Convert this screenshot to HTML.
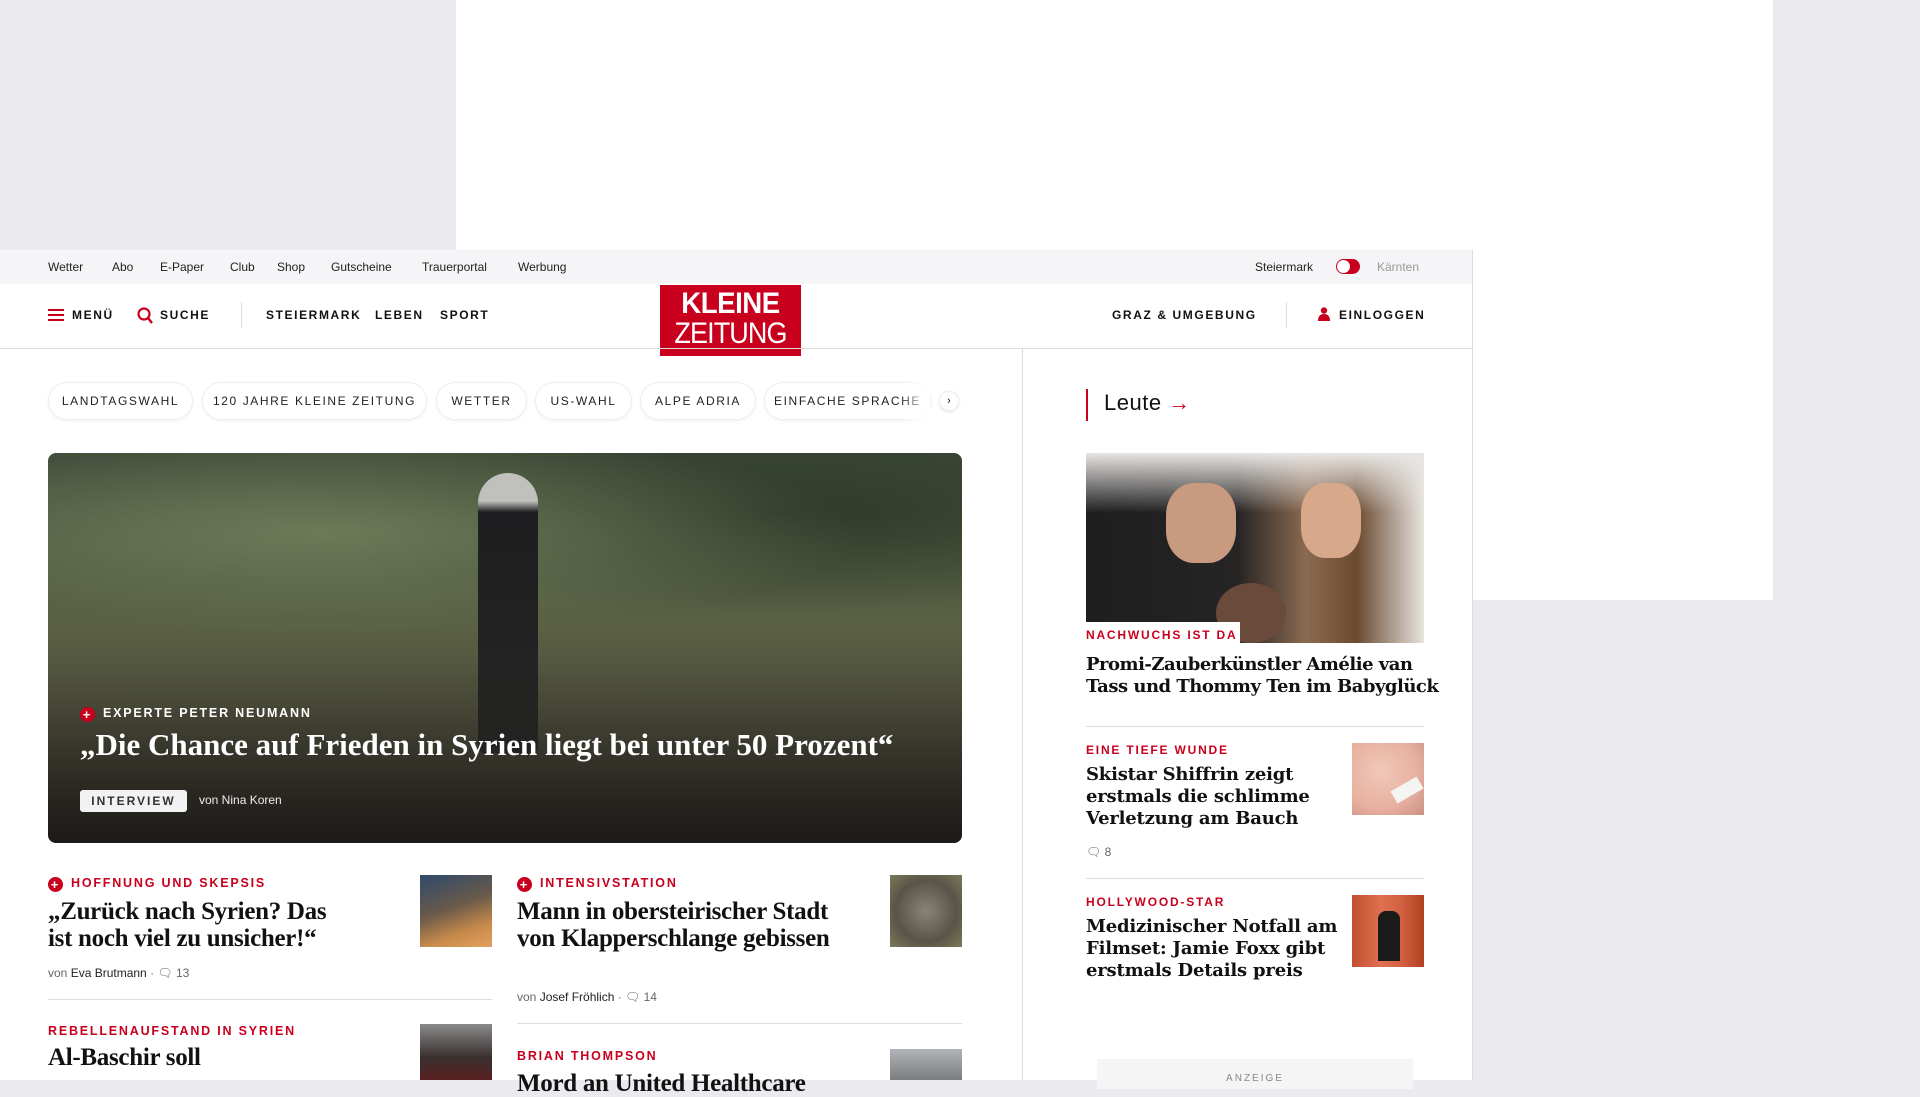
<!DOCTYPE html>
<html><head><meta charset="utf-8"><style>
*{margin:0;padding:0;box-sizing:border-box}
body{width:1920px;height:1080px;overflow:hidden;background:#ebebef;font-family:"Liberation Sans",sans-serif;position:relative;color:#111}
.a{position:absolute}
.ad{left:456px;top:0;width:1317px;height:600px;background:#fff}
.page{left:0;top:250px;width:1473px;height:830px;background:#fff}
.top{left:0;top:250px;width:1473px;height:34px;background:#f5f5f7;font-size:12px;color:#222}
.top span{position:absolute;top:10px}
.nav{font-size:12px;font-weight:bold;letter-spacing:1.6px;color:#111}
.kick{font-size:12.5px;font-weight:bold;letter-spacing:1.8px;color:#c8001e}
.h{font-family:"Liberation Serif",serif;font-weight:bold;color:#111;letter-spacing:-0.3px}
.hr{font-family:"DejaVu Serif",serif;font-weight:bold;color:#111;font-size:18px;line-height:22px;letter-spacing:-0.2px}
.tag{top:382px;height:38px;border:1px solid #eee;border-radius:19px;font-size:12px;letter-spacing:1.6px;color:#222;text-align:center;line-height:36px;box-shadow:0 1px 3px rgba(0,0,0,.06)}
.meta{font-size:12px;color:#666}
.meta b{font-weight:normal;color:#222}
.line{height:1px;background:#ddd}
.plus{display:inline-block;width:15px;height:15px;border-radius:50%;background:#c8001e;color:#fff;font-size:13px;line-height:15px;text-align:center;font-weight:bold;vertical-align:-2px;margin-right:8px}
</style></head><body>
<div class="a ad"></div>
<div class="a page"></div>
<div class="a top">
<span style="left:48px">Wetter</span><span style="left:112px">Abo</span><span style="left:160px">E-Paper</span><span style="left:230px">Club</span><span style="left:277px">Shop</span><span style="left:331px">Gutscheine</span><span style="left:422px">Trauerportal</span><span style="left:518px">Werbung</span>
<span style="left:1255px">Steiermark</span>
<span style="left:1336px;top:9px;width:24px;height:15px;border-radius:8px;background:#c8001e;border:1px solid #c8001e"><i style="position:absolute;left:0;top:0;width:13px;height:13px;border-radius:50%;background:#fff"></i></span>
<span style="left:1377px;color:#999">Kärnten</span>
</div>
<div class="a" style="left:48px;top:309px;width:16px;height:12px;border-top:2px solid #c8001e;border-bottom:2px solid #c8001e"><i style="position:absolute;left:0;top:3px;width:16px;height:2px;background:#c8001e"></i></div>
<div class="a nav" style="left:72px;top:308px">MENÜ</div>
<svg class="a" style="left:137px;top:307px" width="16" height="17" viewBox="0 0 16 17"><circle cx="7" cy="7" r="5.5" fill="none" stroke="#c8001e" stroke-width="2.2"/><path d="M11 11l4 5" stroke="#c8001e" stroke-width="2.4"/></svg>
<div class="a nav" style="left:160px;top:308px">SUCHE</div>
<div class="a" style="left:241px;top:302px;width:1px;height:26px;background:#ddd"></div>
<div class="a nav" style="left:266px;top:308px">STEIERMARK</div>
<div class="a nav" style="left:375px;top:308px">LEBEN</div>
<div class="a nav" style="left:440px;top:308px">SPORT</div>
<div class="a" style="left:660px;top:285px;width:141px;height:71px;background:#c8001e;color:#fff;text-align:center;font-family:'Liberation Sans',sans-serif">
<div style="font-size:30px;font-weight:bold;line-height:31px;margin-top:3px;letter-spacing:-0.5px;transform:scaleX(.92)">KLEINE</div>
<div style="font-size:30px;line-height:30px;letter-spacing:-1px;transform:scaleX(.9)">ZEITUNG</div></div>
<div class="a nav" style="left:1112px;top:308px">GRAZ &amp; UMGEBUNG</div>
<div class="a" style="left:1286px;top:302px;width:1px;height:26px;background:#ddd"></div>
<svg class="a" style="left:1318px;top:307px" width="12" height="14" viewBox="0 0 12 14"><circle cx="6" cy="3.5" r="3.2" fill="#c8001e"/><path d="M0 14c0-5 2.5-7 6-7s6 2 6 7z" fill="#c8001e"/></svg>
<div class="a nav" style="left:1339px;top:308px">EINLOGGEN</div>
<div class="a line" style="left:0;top:348px;width:1473px"></div>
<div class="a" style="left:1022px;top:349px;width:1px;height:731px;background:#ddd"></div>
<div class="a" style="left:1472px;top:250px;width:1px;height:830px;background:#ddd"></div>
<div class="a tag" style="left:48px;width:145px">LANDTAGSWAHL</div>
<div class="a tag" style="left:202px;width:225px">120 JAHRE KLEINE ZEITUNG</div>
<div class="a tag" style="left:436px;width:91px">WETTER</div>
<div class="a tag" style="left:535px;width:97px">US-WAHL</div>
<div class="a tag" style="left:640px;width:116px">ALPE ADRIA</div>
<div class="a tag" style="left:764px;width:167px;color:#222">EINFACHE SPRACHE</div>
<div class="a" style="left:900px;top:380px;width:30px;height:42px;background:linear-gradient(90deg,rgba(255,255,255,0),#fff)"></div>
<div class="a" style="left:939px;top:391px;width:20px;height:20px;border-radius:50%;border:1px solid #eee;font-size:11px;text-align:center;line-height:18px;box-shadow:0 1px 3px rgba(0,0,0,.1)">›</div>
<div class="a" style="left:48px;top:453px;width:914px;height:390px;border-radius:8px;overflow:hidden;background:linear-gradient(180deg,#3e4a38 0%,#4f5a40 25%,#5a6044 45%,#4e4e3c 65%,#3a372e 85%,#2a2824 100%)">
<div class="a" style="left:0;top:0;width:914px;height:200px;background:radial-gradient(ellipse at 30% 40%,#6d7a58 0%,rgba(0,0,0,0) 60%),radial-gradient(ellipse at 80% 30%,#2e3a28 0%,rgba(0,0,0,0) 50%)"></div>
<div class="a" style="left:430px;top:20px;width:60px;height:280px;background:linear-gradient(180deg,#c0c0bc 0%,#c0c0bc 10%,#1e1e20 14%,#222 60%,#2a2a28 100%);border-radius:30px 30px 6px 6px"></div>
<div class="a" style="left:0;top:200px;width:914px;height:190px;background:linear-gradient(180deg,rgba(0,0,0,0),rgba(0,0,0,.35))"></div>
</div>
<div class="a kick" style="left:80px;top:706px;color:#fff"><span class="plus">+</span>EXPERTE PETER NEUMANN</div>
<div class="a h" style="left:80px;top:727px;font-size:31px;color:#fff;white-space:nowrap;letter-spacing:0">„Die Chance auf Frieden in Syrien liegt bei unter 50 Prozent“</div>
<div class="a" style="left:80px;top:790px;width:107px;height:22px;background:#f2f2f2;border-radius:3px;font-size:12px;font-weight:bold;letter-spacing:2px;color:#333;text-align:center;line-height:22px">INTERVIEW</div>
<div class="a" style="left:199px;top:793px;font-size:12px;color:#eee">von Nina Koren</div>
<div class="a kick" style="left:48px;top:876px"><span class="plus">+</span>HOFFNUNG UND SKEPSIS</div>
<div class="a h" style="left:48px;top:898px;font-size:25px;line-height:27px;width:300px">„Zurück nach Syrien? Das ist noch viel zu unsicher!“</div>
<div class="a" style="left:420px;top:875px;width:72px;height:72px;background:linear-gradient(160deg,#2e4a6a 0%,#6a5a4a 45%,#c88a4a 75%,#e0a060 100%)"></div>
<div class="a meta" style="left:48px;top:966px">von <b>Eva Brutmann</b> · 🗨 13</div>
<div class="a line" style="left:48px;top:999px;width:444px"></div>
<div class="a kick" style="left:48px;top:1024px">REBELLENAUFSTAND IN SYRIEN</div>
<div class="a h" style="left:48px;top:1044px;font-size:25px;line-height:27px">Al-Baschir soll</div>
<div class="a" style="left:420px;top:1024px;width:72px;height:56px;background:linear-gradient(180deg,#8a8a8a,#3a3030 60%,#5a2020)"></div>
<div class="a kick" style="left:517px;top:876px"><span class="plus">+</span>INTENSIVSTATION</div>
<div class="a h" style="left:517px;top:898px;font-size:25px;line-height:27px;width:330px">Mann in obersteirischer Stadt von Klapperschlange gebissen</div>
<div class="a" style="left:890px;top:875px;width:72px;height:72px;background:radial-gradient(circle at 50% 50%,#8a8478,#5a5448 60%,#7a7a5a)"></div>
<div class="a meta" style="left:517px;top:990px">von <b>Josef Fröhlich</b> · 🗨 14</div>
<div class="a line" style="left:517px;top:1023px;width:445px"></div>
<div class="a kick" style="left:517px;top:1049px">BRIAN THOMPSON</div>
<div class="a h" style="left:517px;top:1070px;font-size:25px;line-height:27px">Mord an United Healthcare</div>
<div class="a" style="left:890px;top:1049px;width:72px;height:31px;background:linear-gradient(180deg,#b0b4b8,#7a7e80)"></div>
<div class="a" style="left:1086px;top:389px;width:2px;height:32px;background:#c8001e"></div>
<div class="a" style="left:1104px;top:390px;font-size:22px;color:#111;letter-spacing:.5px">Leute <span style="color:#c8001e">→</span></div>
<div class="a" style="left:1086px;top:453px;width:338px;height:190px;overflow:hidden;background:linear-gradient(90deg,#1e1e1e 0%,#262424 45%,#8a6a50 65%,#6a4a30 80%,#e8e4e0 100%)">
<div class="a" style="left:0;top:0;width:338px;height:60px;background:linear-gradient(180deg,#e8e6e4,rgba(232,230,228,0))"></div>
<div class="a" style="left:80px;top:30px;width:70px;height:80px;border-radius:40%;background:#c89a80"></div>
<div class="a" style="left:215px;top:30px;width:60px;height:75px;border-radius:40%;background:#d8a88a"></div>
<div class="a" style="left:130px;top:130px;width:70px;height:60px;border-radius:50%;background:#6a4a3a"></div>
</div>
<div class="a kick" style="left:1086px;top:622px;width:154px;height:21px;background:#fff;padding:6px 0 0 0;font-size:12px">NACHWUCHS IST DA</div>
<div class="a hr" style="left:1086px;top:654px;width:360px;letter-spacing:-0.5px">Promi-Zauberkünstler Amélie van Tass und Thommy Ten im Babyglück</div>
<div class="a line" style="left:1086px;top:726px;width:338px"></div>
<div class="a kick" style="left:1086px;top:743px;font-size:12px">EINE TIEFE WUNDE</div>
<div class="a hr" style="left:1086px;top:764px;width:240px">Skistar Shiffrin zeigt erstmals die schlimme Verletzung am Bauch</div>
<div class="a" style="left:1352px;top:743px;width:72px;height:72px;overflow:hidden;background:radial-gradient(circle at 40% 40%,#f0c8b8,#e8b0a0 60%,#c89080)"><i style="position:absolute;left:40px;top:40px;width:30px;height:14px;background:#f4f4f0;transform:rotate(-30deg)"></i></div>
<div class="a meta" style="left:1086px;top:845px">🗨 8</div>
<div class="a line" style="left:1086px;top:878px;width:338px"></div>
<div class="a kick" style="left:1086px;top:895px;font-size:12px">HOLLYWOOD-STAR</div>
<div class="a hr" style="left:1086px;top:916px;width:260px">Medizinischer Notfall am Filmset: Jamie Foxx gibt erstmals Details preis</div>
<div class="a" style="left:1352px;top:895px;width:72px;height:72px;background:linear-gradient(90deg,#c05030,#e07050 40%,#d06040 70%,#b04020)"><i style="position:absolute;left:26px;top:16px;width:22px;height:50px;background:#1a1a1a;border-radius:8px 8px 0 0"></i></div>
<div class="a" style="left:1097px;top:1059px;width:316px;height:30px;background:#f5f5f5;text-align:center;font-size:10px;letter-spacing:2px;color:#888;padding-top:14px">ANZEIGE</div>
</body></html>
